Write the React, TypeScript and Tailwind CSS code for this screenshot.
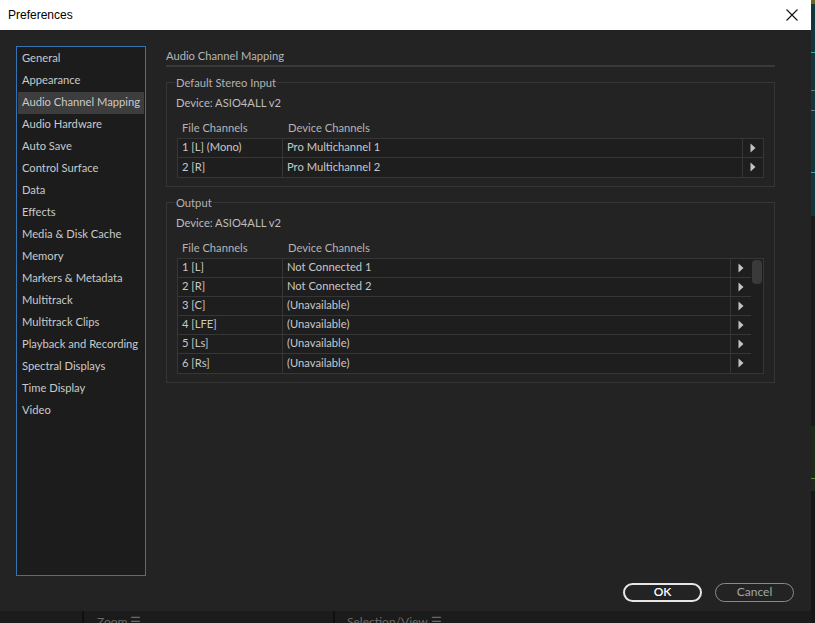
const sections = [
  "General",
  "Appearance",
  "Audio Channel Mapping",
  "Audio Hardware",
  "Auto Save",
  "Control Surface",
  "Data",
  "Effects",
  "Media & Disk Cache",
  "Memory",
  "Markers & Metadata",
  "Multitrack",
  "Multitrack Clips",
  "Playback and Recording",
  "Spectral Displays",
  "Time Display",
  "Video",
];

const inputRows = [
  ["1 [L] (Mono)", "Pro Multichannel 1"],
  ["2 [R]", "Pro Multichannel 2"],
];

const outputRows = [
  ["1 [L]", "Not Connected 1"],
  ["2 [R]", "Not Connected 2"],
  ["3 [C]", "(Unavailable)"],
  ["4 [LFE]", "(Unavailable)"],
  ["5 [Ls]", "(Unavailable)"],
  ["6 [Rs]", "(Unavailable)"],
];

function Arrow() {
  return (
    <svg width="6" height="10" viewBox="0 0 6 10" className="block">
      <path d="M0.5 0.5 L5.5 5 L0.5 9.5 Z" fill="#c4c4c4" />
    </svg>
  );
}

function Group({
  title,
  rows,
  scroll,
}: {
  title: string;
  rows: string[][];
  scroll?: boolean;
}) {
  return (
    <fieldset className="border border-[#363636] px-[10px] pb-[8px]">
      <legend className="ml-[-2px] px-px h-4 leading-4 text-[#b2b2b2]">{title}</legend>
      <div className="mt-1 h-4 leading-4 -ml-px text-[#bdbdbd]">Device: ASIO4ALL v2</div>
      <div className="mt-[9px] h-[18px] flex items-center text-[#b4b4b4]">
        <div className="w-[106px] pl-[5px]">File Channels</div>
        <div className="pl-[5px]">Device Channels</div>
      </div>
      <div className="border border-[#363636] bg-[#1e1e1e] flex">
        <div className="flex-1">
          {rows.map(([a, b], i) => (
            <div
              key={i}
              className={
                "h-[19px] flex items-center text-[#c8c8c8] " +
                (i < rows.length - 1 ? "border-b border-[#363636]" : "")
              }
            >
              <div className="w-[105px] h-full flex items-center pl-[4px] border-r border-[#363636]">{a}</div>
              <div className="flex-1 h-full flex items-center pl-[4px] border-r border-[#363636]">{b}</div>
              <div className="w-[20px] h-full flex items-center pl-[7px]">
                <Arrow />
              </div>
            </div>
          ))}
        </div>
        {scroll && (
          <div className="w-[12px] pt-[1px] flex justify-center">
            <div className="w-[10px] h-[24px] rounded-[4px] bg-[#3a3a3a]" />
          </div>
        )}
      </div>
    </fieldset>
  );
}

export default function App() {
  return (
    <div className="w-[815px] h-[623px] flex overflow-hidden bg-[#1b1b1b] text-[11.2px] font-['Lato','Noto_Sans',sans-serif]">
      <div className="w-[811px] flex flex-col">
        {/* Title bar */}
        <div className="h-[30px] bg-white flex items-center justify-between pl-[8px] pr-[13px] font-['Liberation_Sans',sans-serif] text-[12px] text-black">
          <span>Preferences</span>
          <svg width="12" height="12" viewBox="0 0 12 12">
            <path d="M0.5 0.5 L11.5 11.5 M11.5 0.5 L0.5 11.5" stroke="#111" strokeWidth="1.1" />
          </svg>
        </div>

        {/* Body */}
        <div className="h-[585px] bg-[#232323] flex flex-col">
          <div className="flex pt-4 pl-4 gap-5">
            <div className="w-[130px] h-[530px] border border-[#3574b4] bg-[#1c1c1c] p-px">
              {sections.map((s) => (
                <div
                  key={s}
                  className={
                    "h-[22px] flex items-center pl-[4px] text-[#cacaca] whitespace-nowrap " +
                    (s === "Audio Channel Mapping" ? "bg-[#3d3d3d]" : "")
                  }
                >
                  {s}
                </div>
              ))}
            </div>

            <div className="w-[609px] flex flex-col">
              <div className="h-[21px] border-b-2 border-[#393939] leading-[19px] text-[#b6b6b6]">
                Audio Channel Mapping
              </div>
              <div className="mt-2">
                <Group title="Default Stereo Input" rows={inputRows} />
              </div>
              <div className="mt-2">
                <Group title="Output" rows={outputRows} scroll />
              </div>
            </div>
          </div>

          <div className="mt-[7px] flex justify-end gap-[13px] pr-[17px] text-[12px]">
            <button className="w-[79px] h-[19px] rounded-full border-2 border-[#e6e6e6] text-white font-semibold leading-none">
              OK
            </button>
            <button className="w-[79px] h-[19px] rounded-full border-[1.5px] border-[#8a8a8a] text-[#a6a6a6] leading-none">
              Cancel
            </button>
          </div>
        </div>

        {/* Background app strip */}
        <div className="flex-1 bg-[#1b1b1b] flex items-end text-[#6a6a6a] text-[12px] leading-none">
          <div className="w-[82px]" />
          <div className="w-[2px] h-full bg-[#0f0f0f]" />
          <div className="w-[249px] pl-[13px] translate-y-[5px]">Zoom ☰</div>
          <div className="w-[2px] h-full bg-[#0f0f0f]" />
          <div className="pl-[12px] translate-y-[5px]">Selection/View ☰</div>
        </div>
      </div>

      <div className="w-[4px] flex flex-col">
        <div className="h-[4px] bg-[#6b6420]" />
        <div className="h-[212px] bg-[#10383c] flex flex-col">
          <div className="mt-[48px] h-px bg-[#3aa3b0]" />
          <div className="mt-[37px] h-px bg-[#6a7a6a]" />
          <div className="mt-[19px] h-px bg-[#6a7a8a]" />
          <div className="mt-[61px] h-px bg-[#3aa3b0]" />
        </div>
        <div className="h-[210px] bg-[#1a1a1a]" />
        <div className="h-[65px] bg-[#1e2a1a] flex flex-col">
          <div className="mt-[52px] h-px bg-[#5a8a3a]" />
        </div>
        <div className="flex-1 bg-[#161616]" />
      </div>
    </div>
  );
}
